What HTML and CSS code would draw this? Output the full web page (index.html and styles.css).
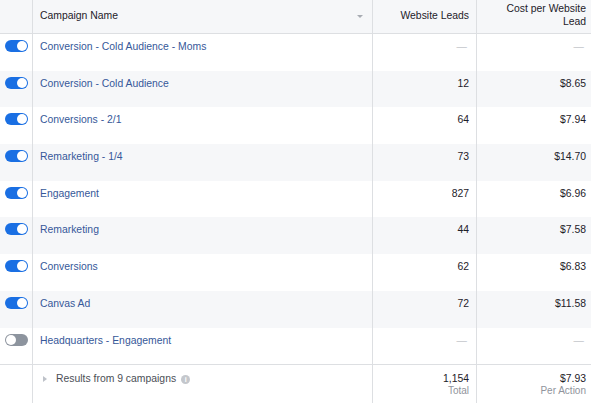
FILE: index.html
```html
<!DOCTYPE html>
<html>
<head>
<meta charset="utf-8">
<link rel="stylesheet" href="styles.css">
</head>
<body>
<div class="table">
  <div class="row head">
    <div class="cell c-tog"></div>
    <div class="cell c-name"><span>Campaign Name</span><span class="sort"></span></div>
    <div class="cell c-num"><span>Website Leads</span></div>
    <div class="cell c-num last"><span>Cost per Website<br>Lead</span></div>
  </div>

  <div class="row">
    <div class="cell c-tog"><span class="toggle on"></span></div>
    <div class="cell c-name"><a class="link">Conversion - Cold Audience - Moms</a></div>
    <div class="cell c-num"><span class="dash">—</span></div>
    <div class="cell c-num last"><span class="dash">—</span></div>
  </div>
  <div class="row alt">
    <div class="cell c-tog"><span class="toggle on"></span></div>
    <div class="cell c-name"><a class="link">Conversion - Cold Audience</a></div>
    <div class="cell c-num">12</div>
    <div class="cell c-num last">$8.65</div>
  </div>
  <div class="row">
    <div class="cell c-tog"><span class="toggle on"></span></div>
    <div class="cell c-name"><a class="link">Conversions - 2/1</a></div>
    <div class="cell c-num">64</div>
    <div class="cell c-num last">$7.94</div>
  </div>
  <div class="row alt">
    <div class="cell c-tog"><span class="toggle on"></span></div>
    <div class="cell c-name"><a class="link">Remarketing - 1/4</a></div>
    <div class="cell c-num">73</div>
    <div class="cell c-num last">$14.70</div>
  </div>
  <div class="row">
    <div class="cell c-tog"><span class="toggle on"></span></div>
    <div class="cell c-name"><a class="link">Engagement</a></div>
    <div class="cell c-num">827</div>
    <div class="cell c-num last">$6.96</div>
  </div>
  <div class="row alt">
    <div class="cell c-tog"><span class="toggle on"></span></div>
    <div class="cell c-name"><a class="link">Remarketing</a></div>
    <div class="cell c-num">44</div>
    <div class="cell c-num last">$7.58</div>
  </div>
  <div class="row">
    <div class="cell c-tog"><span class="toggle on"></span></div>
    <div class="cell c-name"><a class="link">Conversions</a></div>
    <div class="cell c-num">62</div>
    <div class="cell c-num last">$6.83</div>
  </div>
  <div class="row alt">
    <div class="cell c-tog"><span class="toggle on"></span></div>
    <div class="cell c-name"><a class="link">Canvas Ad</a></div>
    <div class="cell c-num">72</div>
    <div class="cell c-num last">$11.58</div>
  </div>
  <div class="row">
    <div class="cell c-tog"><span class="toggle off"></span></div>
    <div class="cell c-name"><a class="link">Headquarters - Engagement</a></div>
    <div class="cell c-num"><span class="dash">—</span></div>
    <div class="cell c-num last"><span class="dash">—</span></div>
  </div>

  <div class="row foot">
    <div class="cell c-tog"></div>
    <div class="cell c-name"><span class="expand"></span><span class="results">Results from 9 campaigns</span><span class="info">i</span></div>
    <div class="cell c-num"><div class="total">1,154</div><div class="sub">Total</div></div>
    <div class="cell c-num last"><div class="total">$7.93</div><div class="sub">Per Action</div></div>
  </div>
</div>
</body>
</html>
```

FILE: styles.css
```css
html, body {
  margin: 0;
  padding: 0;
  background: #ffffff;
  overflow: hidden;
}
body {
  font-family: "Liberation Sans", Arial, Helvetica, sans-serif;
  font-size: 10.4px;
  color: #1d2129;
}
.table {
  width: 591px;
}
.row {
  display: grid;
  grid-template-columns: 33px 340px 104px 1fr;
  height: 36.7px;
  background: #ffffff;
}
.row.alt {
  background: #f6f7f9;
}
.cell {
  border-right: 1px solid #dddfe2;
  padding-top: 7px;
  line-height: 12px;
  box-sizing: border-box;
  overflow: hidden;
}
.cell.last {
  border-right: none;
  padding-right: 5px;
}
.c-tog {
  padding-top: 6px;
  padding-left: 5px;
}
.c-name {
  padding-left: 7px;
}
.c-num {
  text-align: right;
  padding-right: 7px;
}

/* header */
.row.head {
  height: 34px;
  background: #f6f7f9;
  border-bottom: 1px solid #dddfe2;
  box-sizing: border-box;
}
.row.head .cell {
  padding-top: 0;
  padding-bottom: 3px;
  display: flex;
  align-items: center;
  line-height: 13px;
  color: #1d2129;
}
.row.head .c-num {
  justify-content: flex-end;
}
.row.head .c-name {
  justify-content: space-between;
  padding-right: 9px;
}
.sort {
  width: 0;
  height: 0;
  border-left: 3px solid transparent;
  border-right: 3px solid transparent;
  border-top: 3px solid #a8acb3;
  margin-top: 2px;
}

/* links */
.link {
  color: #365899;
  text-decoration: none;
}
.dash {
  color: #c4c7cc;
  padding-right: 2px;
}

/* toggle */
.toggle {
  display: block;
  position: relative;
  width: 23px;
  height: 12px;
  border-radius: 6px;
  background: #1a6fe3;
}
.toggle::after {
  content: "";
  position: absolute;
  top: 1px;
  width: 10px;
  height: 10px;
  border-radius: 50%;
  background: #ffffff;
}
.toggle.on::after {
  right: 1px;
}
.toggle.off {
  background: #8d949e;
}
.toggle.off::after {
  left: 1px;
}

/* footer */
.row.foot {
  height: 38px;
  border-top: 1px solid #dddfe2;
  box-sizing: content-box;
}
.row.foot .cell {
  padding-top: 8px;
}
.row.foot .c-name {
  display: flex;
  align-items: flex-start;
  padding-left: 10px;
}
.expand {
  width: 0;
  height: 0;
  border-top: 3px solid transparent;
  border-bottom: 3px solid transparent;
  border-left: 4px solid #bec2c9;
  margin-top: 3px;
  margin-right: 9px;
}
.results {
  color: #4b4f56;
}
.info {
  display: inline-block;
  width: 9px;
  height: 9px;
  border-radius: 50%;
  background: #c4c7cc;
  color: #ffffff;
  font-size: 7px;
  line-height: 9px;
  text-align: center;
  font-weight: bold;
  margin-left: 5px;
  margin-top: 2px;
}
.total {
  color: #1d2129;
}
.sub {
  color: #90949c;
  font-size: 10px;
}
```
